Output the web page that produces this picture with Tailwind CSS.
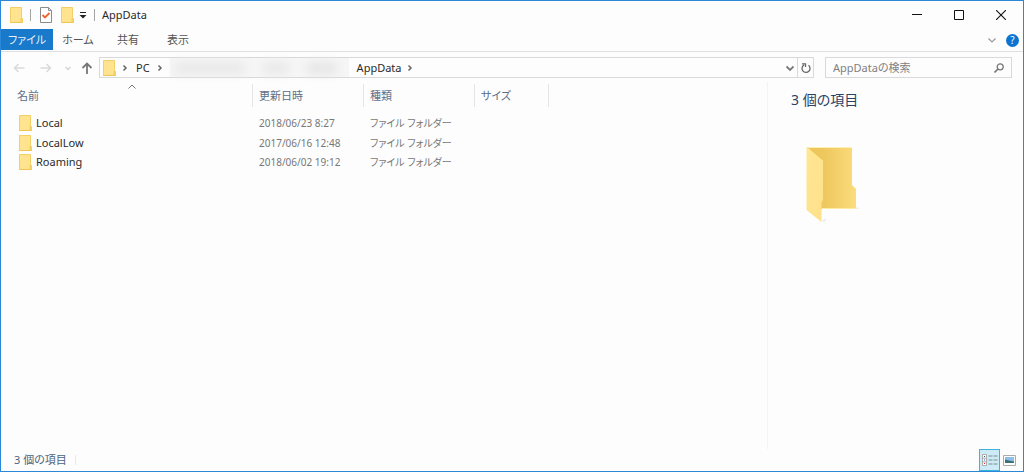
<!DOCTYPE html>
<html lang="ja">
<head>
<meta charset="utf-8">
<title>AppData</title>
<script src="https://cdn.jsdelivr.net/npm/@tailwindcss/browser@4"></script>
</head>
<body class="flex h-screen flex-col overflow-hidden border border-[#2b88d8] bg-[#fdfdfd] font-['Noto_Sans','Noto_Sans_CJK_JP',sans-serif] text-[11px] leading-4 text-[#2a2a2a] [font-feature-settings:'palt']">
<svg class="hidden" aria-hidden="true">
  <symbol id="folder" viewBox="0 0 13 16">
    <path d="M.5.5h11v10.200l1 .8v4H.5z" fill="#ffe38f" stroke="#f3cf68"/>
    <path d="M10.500 11.500v4h2v-4l-1-1z" fill="#f4cf62"/>
    <path d="M.5 15.500h12" stroke="#efc653"/>
  </symbol>
  <symbol id="crumb" viewBox="0 0 6 8"><path d="M1.500 1.500L4 4 1.500 6.500" fill="none" stroke="#666" stroke-width="1.500"/></symbol>
</svg>

<header class="flex h-7 shrink-0 items-center">
  <svg class="ml-[9px] h-4 w-[13px]"><use href="#folder"/></svg>
  <span class="ml-[7px] h-3 w-px bg-[#a5a5a5]"></span>
  <button class="ml-[9px]" aria-label="プロパティ">
    <svg class="h-4 w-3" viewBox="0 0 12 16"><path d="M.5.500h8l3 3v12H.5z" fill="#fff" stroke="#8b8b8b"/><path d="M8.500.5v3h3" fill="none" stroke="#8b8b8b"/><path d="M2.500 8l2.500 2.500L9.500 6" fill="none" stroke="#f0642f" stroke-width="1.800"/></svg>
  </button>
  <button class="ml-[9px]" aria-label="新しいフォルダー"><svg class="h-4 w-[13px]"><use href="#folder"/></svg></button>
  <button class="ml-[5px]" aria-label="クイック アクセスのカスタマイズ"><svg class="h-2 w-2" viewBox="0 0 8 8"><path d="M1 1.500h6" stroke="#222"/><path d="M.5 4h7L4 7.500z" fill="#222"/></svg></button>
  <span class="ml-[7px] h-3 w-px bg-[#a5a5a5]"></span>
  <h1 class="ml-[7px]">AppData</h1>
  <div class="ml-auto mr-[17px] flex items-center gap-8">
    <button aria-label="最小化"><svg class="h-2.5 w-2.5" viewBox="0 0 10 10"><path d="M0 4.500h10" stroke="#111"/></svg></button>
    <button aria-label="最大化"><svg class="h-2.5 w-2.5" viewBox="0 0 10 10"><path d="M.5.500h9v9h-9z" fill="none" stroke="#111"/></svg></button>
    <button aria-label="閉じる"><svg class="h-2.5 w-2.5" viewBox="0 0 10 10"><path d="M0 0l10 10M10 0L0 10" stroke="#111" stroke-width="1.100"/></svg></button>
  </div>
</header>

<nav class="flex h-[23px] shrink-0 items-stretch border-b border-[#dedfe0] text-[#555]">
  <button class="mb-px w-[52px] bg-[#1979ca] text-[#e8f1f9]">ファイル</button>
  <button class="w-[50px]">ホーム</button>
  <button class="w-[50px]">共有</button>
  <button class="w-[50px]">表示</button>
  <div class="ml-auto mr-1 flex items-center gap-2.5">
    <button aria-label="リボンの展開"><svg class="h-2 w-2" viewBox="0 0 8 8"><path d="M.5 2.500L4 6l3.500-3.500" fill="none" stroke="#999" stroke-width="1.200"/></svg></button>
    <button class="flex size-[13px] items-center justify-center rounded-full bg-[#0a75d1] text-[10px] text-white" aria-label="ヘルプ">?</button>
  </div>
</nav>

<div class="mt-[5px] flex h-[21px] shrink-0 items-center pr-[11px]">
  <div class="flex w-[98px] shrink-0 items-center pl-3">
    <button aria-label="戻る"><svg class="h-2.5 w-3" viewBox="0 0 12 10"><path d="M11.500 5H1.500M5.500 1L1.500 5l4 4" fill="none" stroke="#dadada" stroke-width="1.500"/></svg></button>
    <button class="ml-[15px]" aria-label="進む"><svg class="h-2.5 w-3" viewBox="0 0 12 10"><path d="M.5 5h10M6.500 1l4 4-4 4" fill="none" stroke="#dadada" stroke-width="1.500"/></svg></button>
    <button class="ml-[13px]" aria-label="履歴"><svg class="h-1.5 w-1.5" viewBox="0 0 6 6"><path d="M.5 2L3 4.500 5.500 2" fill="none" stroke="#d5d5d5" stroke-width="1.500"/></svg></button>
    <button class="ml-2.5" aria-label="上へ"><svg class="h-3 w-3" viewBox="0 0 12 12"><path d="M6 12V1.500M1.500 6L6 1.500 10.500 6" fill="none" stroke="#777" stroke-width="1.800"/></svg></button>
  </div>
  <div class="flex h-full min-w-0 flex-1 items-center border border-[#d9d9d9]">
    <svg class="ml-[3px] h-4 w-[13px]"><use href="#folder"/></svg>
    <svg class="ml-1.5 h-2 w-1.5"><use href="#crumb"/></svg>
    <a href="#" class="ml-2">PC</a>
    <svg class="ml-[7px] h-2 w-1.5"><use href="#crumb"/></svg>
    <div class="ml-[7px] flex h-full w-[179px] items-center gap-4 bg-[#f6f6f6] px-1">
      <span class="h-3 w-[72px] rounded-full bg-[#e9e9e9] blur-[5px]"></span>
      <span class="h-3 w-7 rounded-full bg-[#e9e9e9] blur-[5px]"></span>
      <span class="h-3 w-8 rounded-full bg-[#e6e6e6] blur-[5px]"></span>
    </div>
    <a href="#" class="ml-2">AppData</a>
    <svg class="ml-[5px] h-2 w-1.5"><use href="#crumb"/></svg>
    <button class="ml-auto mr-[3px]" aria-label="以前の場所"><svg class="h-2 w-2" viewBox="0 0 8 8"><path d="M.5 2.500L4 6l3.500-3.500" fill="none" stroke="#777" stroke-width="1.800"/></svg></button>
    <button class="flex h-full w-4 items-center justify-center border-l border-[#d9d9d9]" aria-label="最新の情報に更新"><svg class="h-3 w-2.5" viewBox="0 0 10 12"><path d="M7.500 3.300A4 4 0 1 1 3 3M1 1.800h3.500V5" fill="none" stroke="#666" stroke-width="1.300"/></svg></button>
  </div>
  <label class="ml-[11px] flex h-full w-[187px] shrink-0 items-center border border-[#d9d9d9] pl-[7px] pr-[7px]">
    <input type="text" aria-label="AppDataの検索" placeholder="AppDataの検索" class="min-w-0 flex-1 outline-none placeholder:text-[#808080]">
    <svg class="h-2.5 w-2.5" viewBox="0 0 10 10"><circle cx="6.200" cy="3.800" r="3" fill="none" stroke="#777" stroke-width="1.300"/><path d="M4 6L.5 9.500" stroke="#777" stroke-width="1.600"/></svg>
  </label>
</div>

<main class="mt-1 flex min-h-0 flex-1">
  <section class="relative min-w-0 flex-1">
    <svg class="absolute left-[127px] top-0.5 h-1.5 w-2" viewBox="0 0 8 6"><path d="M.5 4.500L4 1l3.500 3.500" fill="none" stroke="#777"/></svg>
    <table class="w-[548px] table-fixed text-left text-[#777]">
      <colgroup><col class="w-[252px]"><col class="w-[111px]"><col class="w-[111px]"><col class="w-[74px]"></colgroup>
      <thead>
        <tr class="h-[31px] align-top text-[#5b6f88]">
          <th class="pl-4 font-normal"><div class="mt-0.5 h-[23px] border-r border-[#e5e5e5] pt-1">名前</div></th>
          <th class="pl-1.5 font-normal"><div class="mt-0.5 h-[23px] border-r border-[#e5e5e5] pt-1">更新日時</div></th>
          <th class="pl-1.5 font-normal"><div class="mt-0.5 h-[23px] border-r border-[#e5e5e5] pt-1">種類</div></th>
          <th class="pl-1.5 font-normal"><div class="mt-0.5 h-[23px] border-r border-[#e5e5e5] pt-1">サイズ</div></th>
        </tr>
      </thead>
      <tbody class="text-[10px]">
        <tr class="h-5"><td class="pl-[18px]"><a href="#" class="flex items-center gap-1 text-[11px] text-[#2a2a2a]"><svg class="h-4 w-[13px]"><use href="#folder"/></svg>Local</a></td><td class="pl-1.5">2018/06/23 8:27</td><td class="pl-1.5">ファイル フォルダー</td><td></td></tr>
        <tr class="h-[19px]"><td class="pl-[18px]"><a href="#" class="flex items-center gap-1 text-[11px] text-[#2a2a2a]"><svg class="h-4 w-[13px]"><use href="#folder"/></svg>LocalLow</a></td><td class="pl-1.5">2017/06/16 12:48</td><td class="pl-1.5">ファイル フォルダー</td><td></td></tr>
        <tr class="h-5"><td class="pl-[18px]"><a href="#" class="flex items-center gap-1 text-[11px] text-[#2a2a2a]"><svg class="h-4 w-[13px]"><use href="#folder"/></svg>Roaming</a></td><td class="pl-1.5">2018/06/02 19:12</td><td class="pl-1.5">ファイル フォルダー</td><td></td></tr>
      </tbody>
    </table>
  </section>
  <aside class="w-[256px] shrink-0 border-l border-[#f3f3f3] pl-[23px] pt-2">
    <h2 class="text-[14px] leading-5 text-[#2a4365]">3 個の項目</h2>
    <svg class="ml-[15px] mt-9 h-20 w-14" viewBox="0 0 56 80">
      <defs>
        <linearGradient id="back" x1="0" x2="1"><stop offset="0.300" stop-color="#edc65c"/><stop offset="1" stop-color="#fbdc7c"/></linearGradient>
        <linearGradient id="front" x1="0" y1="0" x2="1" y2="1"><stop offset="0" stop-color="#ffe793"/><stop offset="1" stop-color="#ffe08a"/></linearGradient>
      </defs>
      <path d="M48 61l6 1-3 1h-3z" fill="#ececec"/><path d="M16 75l5-3-3 4z" fill="#e8e8e8"/>
      <path d="M1 1h45v38l4 4v20H15V15z" fill="url(#back)"/>
      <path d="M1 1h45v1H3z" fill="#fff0b8"/>
      <path d="M16 62h34v1H16z" fill="#ffeaa0"/>
      <path d="M.5 1L17 14.500V54l-1.500 2v20L.5 64z" fill="url(#front)"/>
    </svg>
  </aside>
</main>

<footer class="flex h-[22px] shrink-0 items-center text-[#4c6480]">
  <span class="ml-[13px]">3 個の項目</span>
  <span class="ml-2 h-2.5 w-px bg-[#e8e8e8]"></span>
  <button class="ml-auto flex h-[22px] w-[21px] items-center justify-center border border-[#3fb1dd] bg-[#cdebf7]" aria-label="詳細表示">
    <svg class="h-3 w-4" viewBox="0 0 16 12"><path d="M.5.500h4v11h-4zM.5 4.200h4M.5 7.900h4" fill="#fff" stroke="#aaa"/><path d="M6.500 2h4m1 0h4M6.500 6h4m1 0h4M6.500 10h4m1 0h4" stroke="#7f8a90"/><path d="M2 2h1v1H2z" fill="#456"/><path d="M2 5.500h1v1H2z" fill="#36c"/><path d="M2 9h1v1H2z" fill="#d33"/></svg>
  </button>
  <button class="ml-[3px] mr-[7px]" aria-label="大アイコン">
    <svg class="h-[11px] w-[13px]" viewBox="0 0 13 11"><path d="M.5.500h12v10H.5z" fill="#fff" stroke="#aaa"/><path d="M2 2h9v6H2z" fill="#8fbfe9"/><path d="M2 4.500l4 1 5 1V8H2z" fill="#3d6e78"/></svg>
  </button>
</footer>
</body>
</html>
